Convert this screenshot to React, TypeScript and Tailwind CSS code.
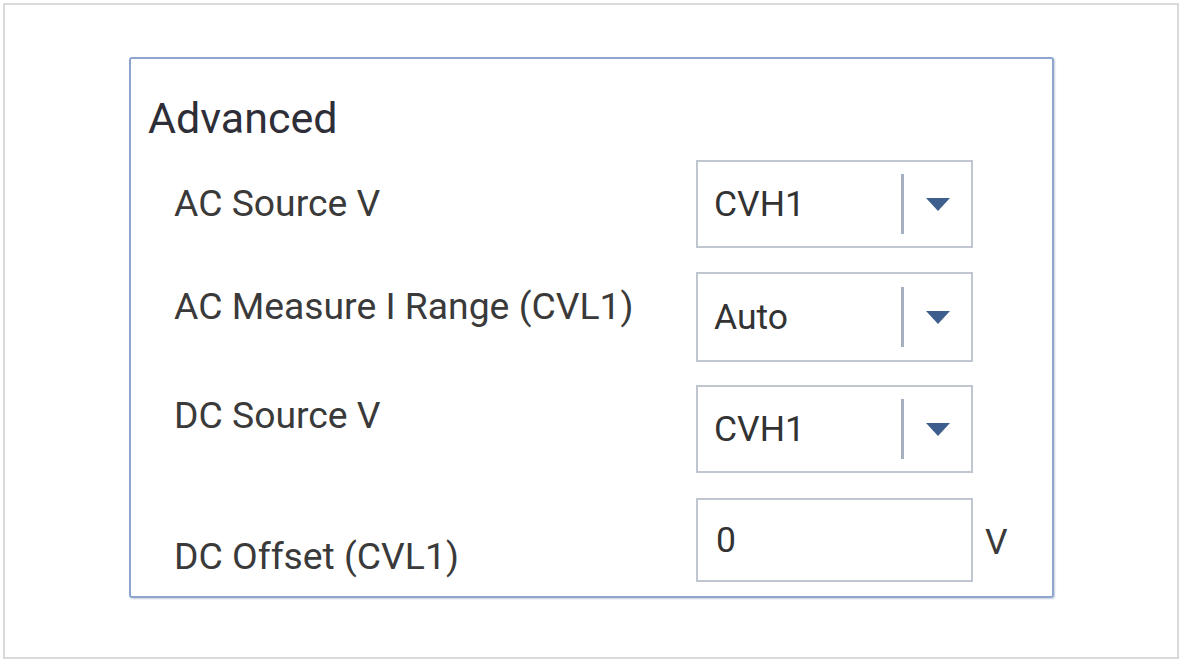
import React from "react";

function Caret() {
  return (
    <svg width="24" height="15" viewBox="0 0 24 15" className="block">
      <polygon points="0,1 24,1 12,14" fill="#3e5f8d" />
    </svg>
  );
}

function Select({ value, h }: { value: string; h: string }) {
  return (
    <div className={`w-[277px] ${h} border-2 border-[#c0c6d0] bg-white flex items-center`}>
      <div className="flex-1 pl-[16px] text-[35.5px] leading-[40px] text-[#333]">{value}</div>
      <div className="w-[3px] h-[60px] bg-[#a6afc0]" />
      <div className="w-[67px] flex items-center justify-center">
        <Caret />
      </div>
    </div>
  );
}

export default function App() {
  return (
    <div
      className="w-[1182px] h-[662px] bg-white p-[3px]"
      style={{ fontFamily: "Roboto, 'Liberation Sans', sans-serif" }}
    >
      <div className="w-full h-full border-2 border-[#d9d9d9] pl-[124px] pt-[52px]">
        <div className="w-[925px] h-[541px] border-2 border-[#8ea6cf] rounded-[3px] shadow-[1px_1px_2px_rgba(90,110,150,0.35)] pt-[35px] pl-[17px]">
          <div className="text-[43px] leading-[48px] text-[#2e2e38]">Advanced</div>
          <div className="mt-[18px] flex flex-col">
            <div className="flex">
              <div className="w-[548px] pl-[26px] mt-[21px] text-[37.3px] leading-[44px] text-[#3a3a3a]">AC Source V</div>
              <Select value="CVH1" h="h-[88px]" />
            </div>
            <div className="flex mt-[24px]">
              <div className="w-[548px] pl-[26px] mt-[12px] text-[37.3px] leading-[44px] text-[#3a3a3a]">AC Measure I Range (CVL1)</div>
              <Select value="Auto" h="h-[90px]" />
            </div>
            <div className="flex mt-[23px]">
              <div className="w-[548px] pl-[26px] mt-[8px] text-[37.3px] leading-[44px] text-[#3a3a3a]">DC Source V</div>
              <Select value="CVH1" h="h-[88px]" />
            </div>
            <div className="flex mt-[25px]">
              <div className="w-[548px] pl-[26px] mt-[36px] text-[37.3px] leading-[44px] text-[#3a3a3a]">DC Offset (CVL1)</div>
              <div className="w-[277px] h-[84px] border-2 border-[#c0c6d0] bg-white flex items-center pl-[18px] text-[35.5px] leading-[40px] text-[#333]">0</div>
              <div className="ml-[12px] mt-[24px] text-[35.5px] leading-[40px] text-[#3a3a3a]">V</div>
            </div>
          </div>
        </div>
      </div>
    </div>
  );
}
